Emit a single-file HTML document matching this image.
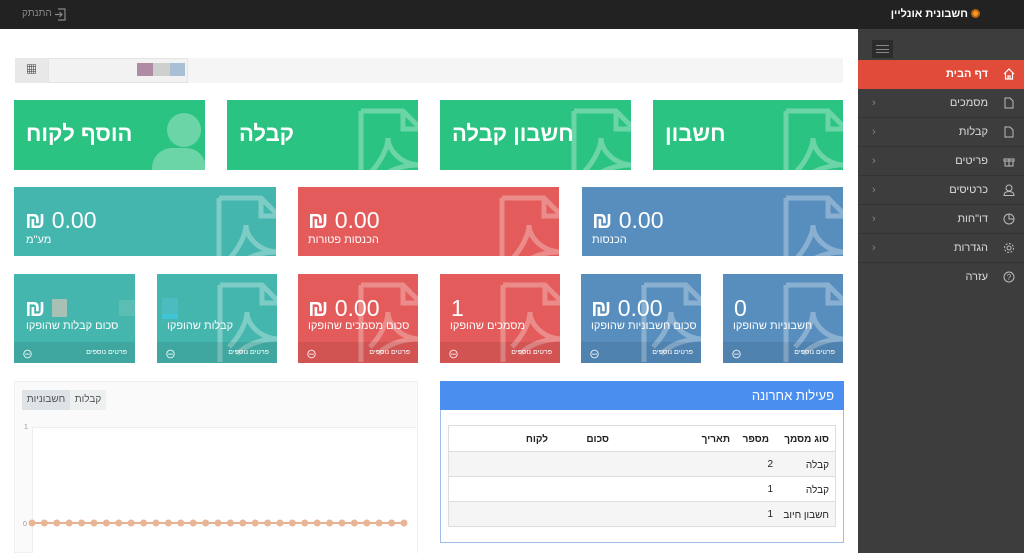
<!DOCTYPE html>
<html><head><meta charset="utf-8">
<style>
*{margin:0;padding:0;box-sizing:border-box}
body{width:1024px;height:553px;overflow:hidden;background:#fff;font-family:"Liberation Sans","Noto Sans CJK SC",sans-serif;position:relative}
.abs{position:absolute}
.top{left:0;top:0;width:1024px;height:29px;background:#222}
.side{left:858px;top:29px;width:166px;height:524px;background:#3d3d3d}
.item{position:absolute;left:0;width:166px;height:29px;border-bottom:1px solid #333;color:#ddd;font-size:11px;direction:rtl;padding-right:36px;line-height:28px}
.item .ic{position:absolute;right:9px;top:8px;width:12px;height:12px}
.item .ch{position:absolute;left:14px;top:0;color:#888;font-size:11px}
.tile{position:absolute;overflow:hidden;color:#fff;direction:rtl}
.g{background:#2bc381}.t{background:#45b6ae}.r{background:#e35b5a}.b{background:#578ebe}
.big{font-size:22px;font-weight:bold;position:absolute;left:12px;top:21px;white-space:nowrap}
.doc{position:absolute}
.num{position:absolute;font-size:23px;direction:ltr;white-space:nowrap}
.lbl{position:absolute;font-size:11px;white-space:nowrap}
.foot{position:absolute;left:0;bottom:0;width:100%;height:21px;background:rgba(0,0,0,0.08);font-size:7px}
</style></head><body>
<div class="abs top"></div>
<div class="abs" style="left:22px;top:8px;color:#888;font-size:10px;direction:rtl">התנתק</div>
<svg class="abs" style="left:54px;top:8px" width="12" height="13" viewBox="0 0 12 13"><path d="M4 1h7v11H4M1 6.5h7M5.5 4l2.5 2.5L5.5 9" fill="none" stroke="#888" stroke-width="1.2"/></svg>
<div class="abs" style="right:56px;top:8px;color:#fff;font-size:11px;font-weight:bold;direction:rtl;white-space:nowrap">חשבונית אונליין</div>
<div class="abs" style="left:971px;top:9px;width:9px;height:9px;border-radius:50%;background:#f0a020;border:2px solid #c06010"></div>

<div class="abs side">
 <div class="abs" style="left:14px;top:11px;width:21px;height:18px;background:#2c2c2c"><div style="margin:5px 4px;height:8px;border-top:1px solid #888;border-bottom:1px solid #888"><div style="margin-top:3px;border-top:1px solid #888"></div></div></div>
 <div class="item" style="top:31px;background:#e04b3a;color:#fff;font-weight:bold;border:none"><svg class="ic" viewBox="0 0 12 12"><path d="M1 6L6 1l5 5M2.5 5v6h7V5M5 11V8h2v3" fill="none" stroke="#fff" stroke-width="1.2"/></svg>דף הבית</div>
 <div class="item" style="top:60px"><svg class="ic" viewBox="0 0 12 12"><path d="M2 1h5l3 3v7H2z" fill="none" stroke="#bbb"/></svg>מסמכים<span class="ch">‹</span></div>
 <div class="item" style="top:89px"><svg class="ic" viewBox="0 0 12 12"><path d="M2 1h5l3 3v7H2z" fill="none" stroke="#bbb"/></svg>קבלות<span class="ch">‹</span></div>
 <div class="item" style="top:118px"><svg class="ic" viewBox="0 0 12 12"><path d="M1 4h10v2H1zM2 6h8v5H2zM6 4v7" fill="none" stroke="#bbb"/></svg>פריטים<span class="ch">‹</span></div>
 <div class="item" style="top:147px"><svg class="ic" viewBox="0 0 12 12"><circle cx="6" cy="4" r="3" fill="none" stroke="#bbb"/><path d="M1 11.5c0-3 2-4 5-4s5 1 5 4z" fill="none" stroke="#bbb"/></svg>כרטיסים<span class="ch">‹</span></div>
 <div class="item" style="top:176px"><svg class="ic" viewBox="0 0 12 12"><circle cx="6" cy="6" r="5" fill="none" stroke="#bbb"/><path d="M6 1v5h5" fill="none" stroke="#bbb"/></svg>דו"חות<span class="ch">‹</span></div>
 <div class="item" style="top:205px"><svg class="ic" viewBox="0 0 12 12"><circle cx="6" cy="6" r="2" fill="none" stroke="#bbb"/><circle cx="6" cy="6" r="4.5" fill="none" stroke="#bbb" stroke-dasharray="2 1.5"/></svg>הגדרות<span class="ch">‹</span></div>
 <div class="item" style="top:234px;border:none"><svg class="ic" viewBox="0 0 12 12"><circle cx="6" cy="6" r="5" fill="none" stroke="#bbb"/><text x="6" y="9" font-size="8" fill="#bbb" text-anchor="middle">?</text></svg>עזרה</div>
</div>

<div class="abs" style="left:15px;top:58px;width:828px;height:25px;background:#f5f5f5"></div>
<div class="abs" style="left:15px;top:58px;width:33px;height:25px;background:#e8e8e8;font-size:11px;text-align:center;line-height:25px">▦</div>
<div class="abs" style="left:48px;top:58px;width:140px;height:25px;background:#f2f2f2;border:1px solid #e4e4e4"></div>
<div class="abs" style="left:137px;top:63px;width:16px;height:13px;background:#b08ca4"></div>
<div class="abs" style="left:153px;top:63px;width:17px;height:13px;background:#cdd0cc"></div>
<div class="abs" style="left:170px;top:63px;width:15px;height:13px;background:#a9bfd4"></div>

<!-- Row1 -->
<div class="tile g" style="left:14px;top:100px;width:191px;height:70px">
 <div style="position:absolute;left:153px;top:13px;width:34px;height:34px;border-radius:50%;background:rgba(255,255,255,.3)"></div>
 <div style="position:absolute;left:138px;top:48px;width:54px;height:40px;border-radius:20px 20px 0 0;background:rgba(255,255,255,.3)"></div>
 <div class="big">הוסף לקוח</div></div>
<div class="tile g" style="left:227px;top:100px;width:191px;height:70px"><svg class="doc" style="left:131px;top:8px" width="66" height="80" viewBox="0 0 66 80"><path d="M3 3h42l18 18v60M3 3v80M45 3v18h18M12 65c10-10 18-25 18-35 0 10 10 25 30 27-15 0-30 5-40 15" fill="none" stroke="rgba(255,255,255,.3)" stroke-width="5"/></svg><div class="big">קבלה</div></div>
<div class="tile g" style="left:440px;top:100px;width:191px;height:70px"><svg class="doc" style="left:131px;top:8px" width="66" height="80" viewBox="0 0 66 80"><path d="M3 3h42l18 18v60M3 3v80M45 3v18h18M12 65c10-10 18-25 18-35 0 10 10 25 30 27-15 0-30 5-40 15" fill="none" stroke="rgba(255,255,255,.3)" stroke-width="5"/></svg><div class="big">חשבון קבלה</div></div>
<div class="tile g" style="left:653px;top:100px;width:190px;height:70px"><svg class="doc" style="left:130px;top:8px" width="66" height="80" viewBox="0 0 66 80"><path d="M3 3h42l18 18v60M3 3v80M45 3v18h18M12 65c10-10 18-25 18-35 0 10 10 25 30 27-15 0-30 5-40 15" fill="none" stroke="rgba(255,255,255,.3)" stroke-width="5"/></svg><div class="big">חשבון</div></div>

<!-- Row2 -->
<div class="tile t" style="left:14px;top:187px;width:262px;height:69px"><svg class="doc" style="left:202px;top:8px" width="66" height="80" viewBox="0 0 66 80"><path d="M3 3h42l18 18v60M3 3v80M45 3v18h18M12 65c10-10 18-25 18-35 0 10 10 25 30 27-15 0-30 5-40 15" fill="none" stroke="rgba(255,255,255,.3)" stroke-width="5"/></svg><div class="num" style="left:11px;top:20px"><b>₪</b> 0.00</div><div class="lbl" style="left:12px;top:47px">מע"מ</div></div>
<div class="tile r" style="left:298px;top:187px;width:261px;height:69px"><svg class="doc" style="left:201px;top:8px" width="66" height="80" viewBox="0 0 66 80"><path d="M3 3h42l18 18v60M3 3v80M45 3v18h18M12 65c10-10 18-25 18-35 0 10 10 25 30 27-15 0-30 5-40 15" fill="none" stroke="rgba(255,255,255,.3)" stroke-width="5"/></svg><div class="num" style="left:10px;top:20px"><b>₪</b> 0.00</div><div class="lbl" style="left:10px;top:47px">הכנסות פטורות</div></div>
<div class="tile b" style="left:582px;top:187px;width:261px;height:69px"><svg class="doc" style="left:201px;top:8px" width="66" height="80" viewBox="0 0 66 80"><path d="M3 3h42l18 18v60M3 3v80M45 3v18h18M12 65c10-10 18-25 18-35 0 10 10 25 30 27-15 0-30 5-40 15" fill="none" stroke="rgba(255,255,255,.3)" stroke-width="5"/></svg><div class="num" style="left:10px;top:20px"><b>₪</b> 0.00</div><div class="lbl" style="left:10px;top:47px">הכנסות</div></div>

<!-- Row3 -->
<div class="tile t" style="left:14px;top:274px;width:121px;height:89px"><div style="position:absolute;left:38px;top:25px;width:15px;height:18px;background:#a9c1b4"></div><div style="position:absolute;left:105px;top:26px;width:16px;height:16px;background:#5cbdb4"></div><div class="num" style="left:11px;top:21px"><b>₪</b></div><div class="lbl" style="left:12px;top:46px">סכום קבלות שהופקו</div><div class="foot"><span style="position:absolute;left:8px;top:4px;font-size:11px">⊖</span><span style="position:absolute;right:8px;top:7px">פרטים נוספים</span></div></div>
<div class="tile t" style="left:157px;top:274px;width:120px;height:89px"><svg class="doc" style="left:60px;top:8px" width="66" height="80" viewBox="0 0 66 80"><path d="M3 3h42l18 18v60M3 3v80M45 3v18h18M12 65c10-10 18-25 18-35 0 10 10 25 30 27-15 0-30 5-40 15" fill="none" stroke="rgba(255,255,255,.3)" stroke-width="5"/></svg><div style="position:absolute;left:5px;top:24px;width:16px;height:16px;background:#4cbcbe"></div><div style="position:absolute;left:5px;top:40px;width:16px;height:5px;background:#3fc5d5"></div><div class="lbl" style="left:10px;top:46px">קבלות שהופקו</div><div class="foot"><span style="position:absolute;left:8px;top:4px;font-size:11px">⊖</span><span style="position:absolute;right:8px;top:7px">פרטים נוספים</span></div></div>
<div class="tile r" style="left:298px;top:274px;width:120px;height:89px"><svg class="doc" style="left:60px;top:8px" width="66" height="80" viewBox="0 0 66 80"><path d="M3 3h42l18 18v60M3 3v80M45 3v18h18M12 65c10-10 18-25 18-35 0 10 10 25 30 27-15 0-30 5-40 15" fill="none" stroke="rgba(255,255,255,.3)" stroke-width="5"/></svg><div class="num" style="left:10px;top:21px"><b>₪</b> 0.00</div><div class="lbl" style="left:10px;top:46px">סכום מסמכים שהופקו</div><div class="foot"><span style="position:absolute;left:8px;top:4px;font-size:11px">⊖</span><span style="position:absolute;right:8px;top:7px">פרטים נוספים</span></div></div>
<div class="tile r" style="left:440px;top:274px;width:120px;height:89px"><svg class="doc" style="left:60px;top:8px" width="66" height="80" viewBox="0 0 66 80"><path d="M3 3h42l18 18v60M3 3v80M45 3v18h18M12 65c10-10 18-25 18-35 0 10 10 25 30 27-15 0-30 5-40 15" fill="none" stroke="rgba(255,255,255,.3)" stroke-width="5"/></svg><div class="num" style="left:11px;top:21px">1</div><div class="lbl" style="left:10px;top:46px">מסמכים שהופקו</div><div class="foot"><span style="position:absolute;left:8px;top:4px;font-size:11px">⊖</span><span style="position:absolute;right:8px;top:7px">פרטים נוספים</span></div></div>
<div class="tile b" style="left:581px;top:274px;width:120px;height:89px"><svg class="doc" style="left:60px;top:8px" width="66" height="80" viewBox="0 0 66 80"><path d="M3 3h42l18 18v60M3 3v80M45 3v18h18M12 65c10-10 18-25 18-35 0 10 10 25 30 27-15 0-30 5-40 15" fill="none" stroke="rgba(255,255,255,.3)" stroke-width="5"/></svg><div class="num" style="left:10px;top:21px"><b>₪</b> 0.00</div><div class="lbl" style="left:10px;top:46px">סכום חשבוניות שהופקו</div><div class="foot"><span style="position:absolute;left:8px;top:4px;font-size:11px">⊖</span><span style="position:absolute;right:8px;top:7px">פרטים נוספים</span></div></div>
<div class="tile b" style="left:723px;top:274px;width:120px;height:89px"><svg class="doc" style="left:60px;top:8px" width="66" height="80" viewBox="0 0 66 80"><path d="M3 3h42l18 18v60M3 3v80M45 3v18h18M12 65c10-10 18-25 18-35 0 10 10 25 30 27-15 0-30 5-40 15" fill="none" stroke="rgba(255,255,255,.3)" stroke-width="5"/></svg><div class="num" style="left:11px;top:21px">0</div><div class="lbl" style="left:10px;top:46px">חשבוניות שהופקו</div><div class="foot"><span style="position:absolute;left:8px;top:4px;font-size:11px">⊖</span><span style="position:absolute;right:8px;top:7px">פרטים נוספים</span></div></div>

<!-- chart panel -->
<div class="abs" style="left:14px;top:381px;width:404px;height:172px;background:#fafafa;border:1px solid #f0f0f0"></div>
<div class="abs" style="left:22px;top:390px;width:48px;height:20px;background:#dde3e6;font-size:10px;color:#555;text-align:center;line-height:20px">חשבוניות</div>
<div class="abs" style="left:70px;top:390px;width:36px;height:20px;background:#edf0f1;font-size:10px;color:#555;text-align:center;line-height:20px">קבלות</div>
<svg class="abs" style="left:14px;top:415px" width="404" height="138">
<rect x="18.5" y="12.5" width="385" height="140" fill="#fff" stroke="#eee"/>
<text x="10" y="14" font-size="7" fill="#999" font-family="Liberation Sans">1</text>
<text x="9" y="111" font-size="7" fill="#999" font-family="Liberation Sans">0</text>
<line x1="18" y1="108" x2="390" y2="108" stroke="#e8b090" stroke-width="2"/>
<g fill="#e8b596">
<circle cx="18" cy="108" r="3.5"/><circle cx="30.4" cy="108" r="3.5"/><circle cx="42.8" cy="108" r="3.5"/><circle cx="55.2" cy="108" r="3.5"/><circle cx="67.6" cy="108" r="3.5"/><circle cx="80" cy="108" r="3.5"/><circle cx="92.4" cy="108" r="3.5"/><circle cx="104.8" cy="108" r="3.5"/><circle cx="117.2" cy="108" r="3.5"/><circle cx="129.6" cy="108" r="3.5"/><circle cx="142" cy="108" r="3.5"/><circle cx="154.4" cy="108" r="3.5"/><circle cx="166.8" cy="108" r="3.5"/><circle cx="179.2" cy="108" r="3.5"/><circle cx="191.6" cy="108" r="3.5"/><circle cx="204" cy="108" r="3.5"/><circle cx="216.4" cy="108" r="3.5"/><circle cx="228.8" cy="108" r="3.5"/><circle cx="241.2" cy="108" r="3.5"/><circle cx="253.6" cy="108" r="3.5"/><circle cx="266" cy="108" r="3.5"/><circle cx="278.4" cy="108" r="3.5"/><circle cx="290.8" cy="108" r="3.5"/><circle cx="303.2" cy="108" r="3.5"/><circle cx="315.6" cy="108" r="3.5"/><circle cx="328" cy="108" r="3.5"/><circle cx="340.4" cy="108" r="3.5"/><circle cx="352.8" cy="108" r="3.5"/><circle cx="365.2" cy="108" r="3.5"/><circle cx="377.6" cy="108" r="3.5"/><circle cx="390" cy="108" r="3.5"/>
</g></svg>

<!-- activity panel -->
<div class="abs" style="left:440px;top:381px;width:404px;height:162px;border:1px solid #9dbce8;background:#fff"></div>
<div class="abs" style="left:440px;top:381px;width:404px;height:29px;background:#4a8ff0;color:#fff;font-size:13px;direction:rtl;padding-right:10px;line-height:29px">פעילות אחרונה</div>
<div class="abs" style="left:448px;top:425px;width:388px;height:102px;border:1px solid #ddd;font-size:10px;color:#222;direction:rtl">
 <div style="position:absolute;top:0;left:0;width:100%;height:26px;border-bottom:1px solid #ddd;font-weight:bold"><span style="position:absolute;right:6px;top:8px">סוג מסמך</span><span style="position:absolute;right:66px;top:8px">מספר</span><span style="position:absolute;right:105px;top:8px">תאריך</span><span style="position:absolute;right:226px;top:8px">סכום</span><span style="position:absolute;right:287px;top:8px">לקוח</span></div>
 <div style="position:absolute;top:26px;left:0;width:100%;height:25px;background:#f5f5f5;border-bottom:1px solid #ddd"><span style="position:absolute;right:6px;top:8px">קבלה</span><span style="position:absolute;right:62px;top:7px">2</span></div>
 <div style="position:absolute;top:51px;left:0;width:100%;height:25px;border-bottom:1px solid #ddd"><span style="position:absolute;right:6px;top:8px">קבלה</span><span style="position:absolute;right:62px;top:7px">1</span></div>
 <div style="position:absolute;top:76px;left:0;width:100%;height:24px;background:#f5f5f5"><span style="position:absolute;right:6px;top:8px">חשבון חיוב</span><span style="position:absolute;right:62px;top:7px">1</span></div>
</div>
</body></html>
